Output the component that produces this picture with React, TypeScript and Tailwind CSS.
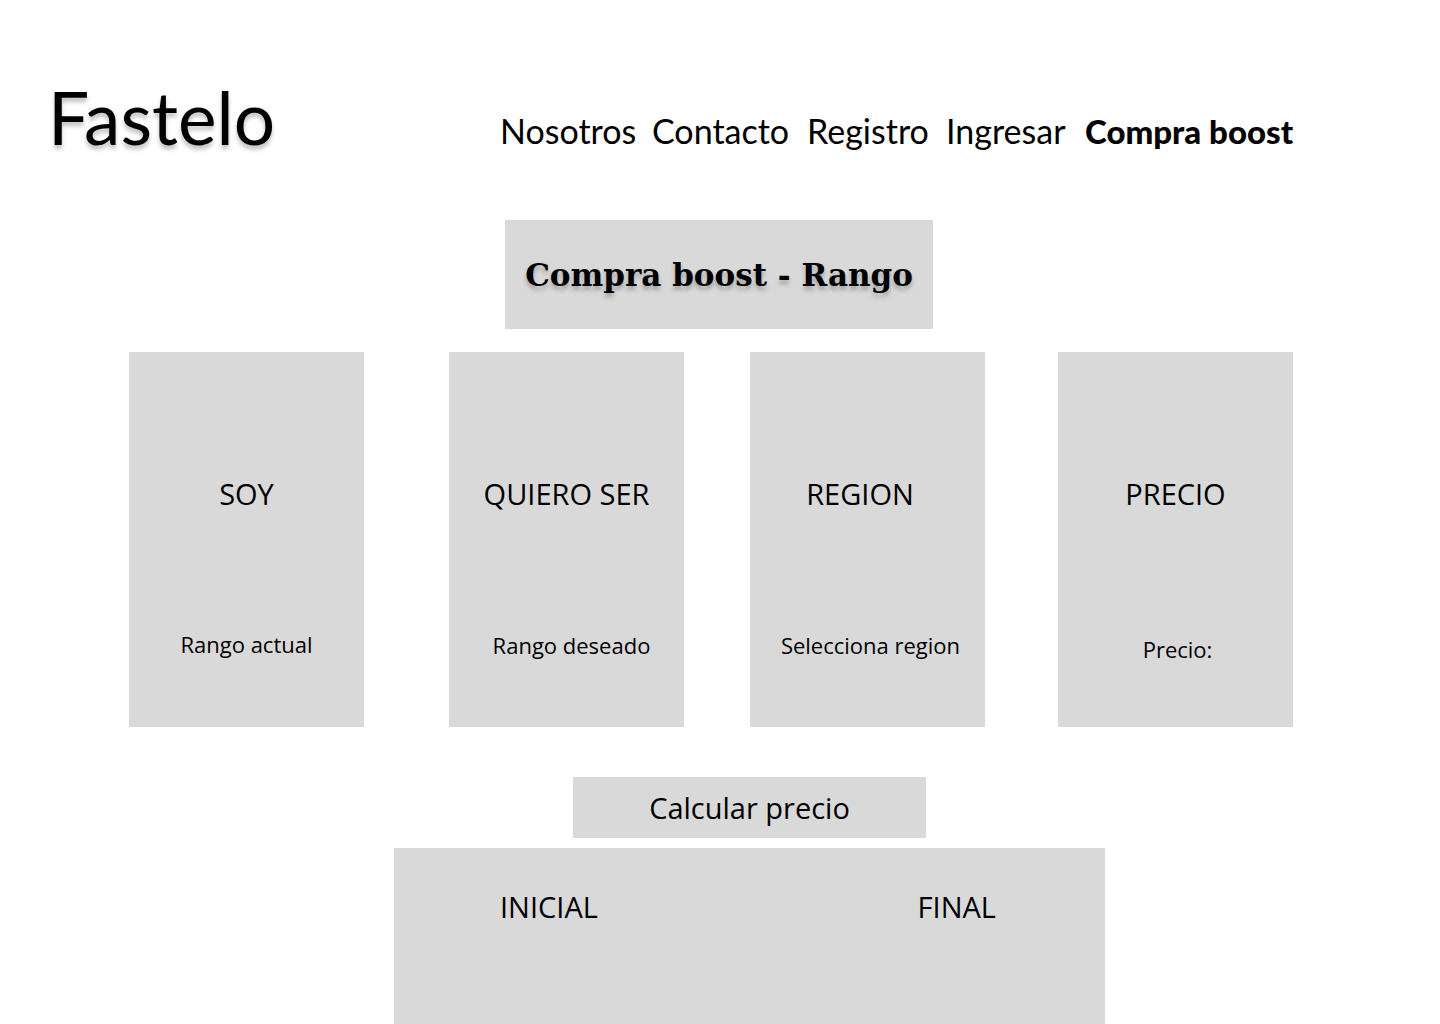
const cards = [
  { title: 'SOY', label: 'Rango actual', place: '', titlePad: '', labelPad: 'mt-[116px]' },
  { title: 'QUIERO SER', label: 'Rango deseado', place: 'ml-[85px]', titlePad: '', labelPad: 'mt-[117px] pl-[10px]' },
  { title: 'REGION', label: 'Selecciona region', place: 'ml-[66px]', titlePad: 'pr-[15px]', labelPad: 'mt-[117px] pl-[6px]' },
  { title: 'PRECIO', label: 'Precio:', place: 'ml-[73px]', titlePad: '', labelPad: 'mt-[121px] pl-[4px]' },
];

const links = [
  { text: 'Nosotros', width: 'w-[134px]' },
  { text: 'Contacto', width: 'w-[137px]' },
  { text: 'Registro', width: 'w-[121px]' },
  { text: 'Ingresar', width: 'w-[121px]' },
];

export default function App() {
  return (
    <div className="bg-white font-['Open_Sans',sans-serif] text-black">
      <header className="flex items-start pb-[59px] pl-[48px] font-['Lato',sans-serif]">
        <a href="#inicio" className="mt-[73px] w-[452px] text-[73px] leading-[88px] [text-shadow:0_4px_4px_rgba(0,0,0,0.25)]">
          Fastelo
        </a>
        <nav className="mt-[111px] flex gap-[18px] text-[34px] leading-[40px] whitespace-nowrap">
          {links.map((link) => (
            <a key={link.text} href={'#' + link.text.toLowerCase()} className={link.width}>
              {link.text}
            </a>
          ))}
          <a href="#boost" className="text-[33px] font-black">Compra boost</a>
        </nav>
      </header>
      <main>
        <div className="flex justify-center pr-[2px]">
          <h1 className="bg-[#d9d9d9] px-[20px] pt-[35px] pb-[34px] font-['DejaVu_Serif',serif] text-[31px] leading-[40px] font-bold whitespace-nowrap [text-shadow:0_4px_4px_rgba(0,0,0,0.25)]">
            Compra boost - Rango
          </h1>
        </div>
        <section className="mt-[23px] flex pr-[147px] pl-[129px]">
          {cards.map((card) => (
            <article key={card.title} className={'min-h-[375px] flex-1 bg-[#d9d9d9] pt-[122px] text-center whitespace-nowrap ' + card.place}>
              <h2 className={'text-[29px] leading-[40px] ' + card.titlePad}>{card.title}</h2>
              <p className={'text-[22px] leading-[28px] ' + card.labelPad}>{card.label}</p>
            </article>
          ))}
        </section>
        <section className="mt-[50px] flex flex-col items-center pl-[59px] text-[29px] leading-[40px]">
          <button className="w-[353px] bg-[#d9d9d9] pt-[11px] pb-[10px]">Calcular precio</button>
          <div className="mt-[10px] flex min-h-[176px] w-[711px] justify-between bg-[#d9d9d9] pt-[39px] pr-[109px] pl-[106px]">
            <h2>INICIAL</h2>
            <h2>FINAL</h2>
          </div>
        </section>
      </main>
    </div>
  );
}
